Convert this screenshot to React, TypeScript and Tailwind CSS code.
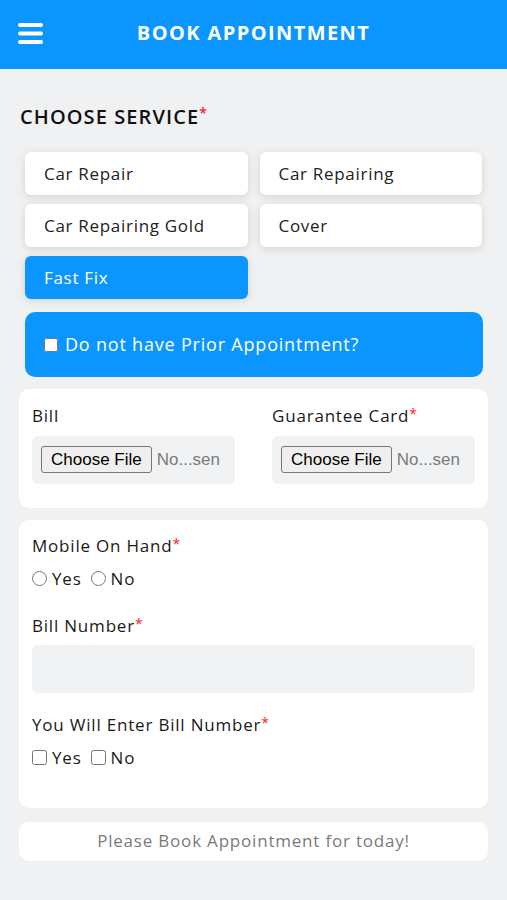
import { useState } from "react";

const services = ["Car Repair", "Car Repairing", "Car Repairing Gold", "Cover", "Fast Fix"];

function Req() {
  return <span className="text-[#ff1a1a] text-[14px] align-top tracking-normal">*</span>;
}

function FakeFile() {
  return (
    <div className="bg-[#f1f2f4] rounded-md h-[48px] flex items-center px-[9px] gap-[5px]">
      <span className="font-['Liberation_Sans',sans-serif] text-[17px] text-black bg-[#efefef] border border-[#767676] rounded-[3px] px-[9px] h-[27px] flex items-center tracking-normal">
        Choose File
      </span>
      <span className="font-['Liberation_Sans',sans-serif] text-[17px] text-[#7a7a7a] tracking-normal">No...sen</span>
    </div>
  );
}

export default function App() {
  const [selected, setSelected] = useState("Fast Fix");

  return (
    <div className="min-h-screen bg-[#f0f1f3] font-['Open_Sans',sans-serif] text-[#1a1a1a] tracking-[0.8px]">
      {/* Header */}
      <header className="h-[69px] bg-[#0a96fe] flex items-center relative">
        <svg className="absolute left-[18px] top-[23px] w-[25px] h-[21px]" viewBox="0 0 25 21">
          <rect x="0" y="0" width="25" height="4" rx="2" fill="white" />
          <rect x="0" y="8.5" width="25" height="4" rx="2" fill="white" />
          <rect x="0" y="17" width="25" height="4" rx="2" fill="white" />
        </svg>
        <h1 className="w-full text-center text-white font-bold text-[20px] tracking-[1.4px] -mt-[4px]">BOOK APPOINTMENT</h1>
      </header>

      <div className="px-[19px]">
        <h2 className="mt-[33px] pl-px text-[20px] font-semibold tracking-[1.1px] text-[#111]">
          CHOOSE SERVICE<Req />
        </h2>

        {/* Services */}
        <div className="mt-[20px] px-[6px] grid grid-cols-2 gap-x-[12px] gap-y-[9px]">
          {services.map((s) => (
            <button
              key={s}
              onClick={() => setSelected(s)}
              className={
                "h-[43px] rounded-[6px] text-left pl-[19px] text-[17px] font-medium tracking-[0.7px] shadow-[0_2px_8px_rgba(0,0,0,0.12)] " +
                (selected === s ? "bg-[#0a96fe] text-white" : "bg-white text-[#222]")
              }
            >
              {s}
            </button>
          ))}
        </div>

        {/* Prior appointment */}
        <div className="mt-[13px] mx-[6px] mr-[5px] h-[65px] bg-[#0a96fe] rounded-[10px] flex items-center pl-[19px] gap-[7px]">
          <input type="checkbox" className="w-[14px] h-[14px] m-0" />
          <span className="text-white text-[18px] font-medium">Do not have Prior Appointment?</span>
        </div>

        {/* Files */}
        <div className="mt-[12px] bg-white rounded-[10px] px-[13px] pt-[14px] pb-[24px] grid grid-cols-2 gap-x-[37px]">
          <div>
            <label className="block text-[17px] font-medium mb-[7px]">Bill</label>
            <FakeFile />
          </div>
          <div>
            <label className="block text-[17px] font-medium mb-[7px]">
              Guarantee Card<Req />
            </label>
            <FakeFile />
          </div>
        </div>

        {/* Details */}
        <div className="mt-[12px] bg-white rounded-[10px] px-[13px] pt-[13px] h-[288px] font-medium">
          <label className="block text-[17px]">
            Mobile On Hand<Req />
          </label>
          <div className="mt-[8px] flex items-center text-[17px]">
            <input type="radio" name="mobile" className="w-[15px] h-[15px] m-0" />
            <span className="ml-[5px]">Yes</span>
            <input type="radio" name="mobile" className="w-[15px] h-[15px] m-0 ml-[9px]" />
            <span className="ml-[5px]">No</span>
          </div>

          <label className="block text-[17px] mt-[21px]">
            Bill Number<Req />
          </label>
          <input type="text" className="mt-[7px] w-full h-[48px] rounded-md bg-[#f1f2f4] outline-none px-3" />

          <label className="block text-[17px] mt-[19px]">
            You Will Enter Bill Number<Req />
          </label>
          <div className="mt-[7px] flex items-center text-[17px]">
            <input type="checkbox" className="w-[15px] h-[15px] m-0" />
            <span className="ml-[5px]">Yes</span>
            <input type="checkbox" className="w-[15px] h-[15px] m-0 ml-[9px]" />
            <span className="ml-[5px]">No</span>
          </div>
        </div>

        {/* Footer note */}
        <div className="mt-[14px] bg-white rounded-[10px] h-[39px] flex items-center justify-center text-[17px] text-[#7a7a7a]">
          Please Book Appointment for today!
        </div>
      </div>
    </div>
  );
}
